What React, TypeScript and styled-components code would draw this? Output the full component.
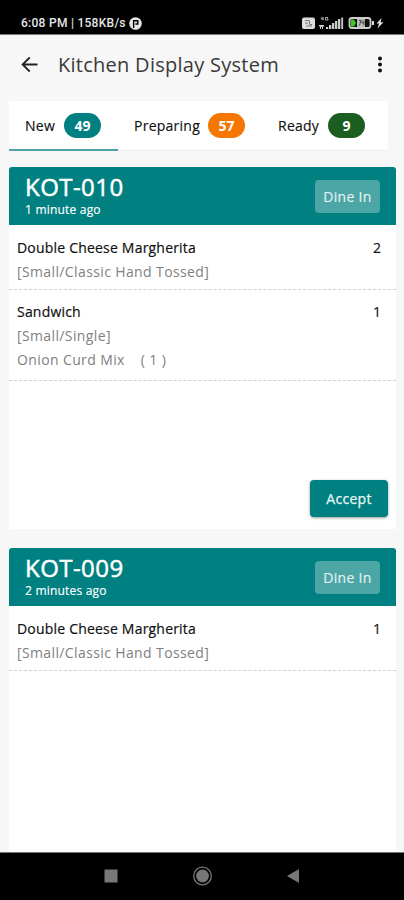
import React from 'react';
import styled, { createGlobalStyle } from 'styled-components';

const GlobalStyle = createGlobalStyle`
  *, *::before, *::after { box-sizing: border-box; }
  html, body { margin: 0; padding: 0; background: #f7f7f7; }
  body { font-family: "Open Sans", "Noto Sans", sans-serif; overflow: hidden; }
  button { font: inherit; border: 0; padding: 0; background: none; cursor: pointer; }
`;

const Screen = styled.div`
  display: flex;
  flex-direction: column;
  width: 404px;
  height: 900px;
  background: #f7f7f7;
  color: #111;
  overflow: hidden;
`;

const StatusBar = styled.div`
  display: flex;
  flex: none;
  justify-content: space-between;
  height: 35px;
  padding: 12px 20px 0 21px;
  background: #000;
  border-bottom: 1px solid #777;
  color: #e6e6e6;
`;

const StatusText = styled.div`
  display: flex;
  align-items: center;
  gap: 3px;
  height: 22px;
  font: 500 12px/22px Roboto, sans-serif;
  letter-spacing: 0.27px;
  white-space: nowrap;
`;

const StatusIcons = styled.div`
  display: flex;
  height: 22px;
  align-items: center;
`;

const TitleBar = styled.header`
  display: flex;
  flex: none;
  align-items: center;
  height: 66px;
  padding: 0 17px 7px 20px;
`;

const IconButton = styled.button`
  display: flex;
  flex: none;
`;

const Title = styled.h1`
  flex: 1;
  margin: 0 0 0 19px;
  font-size: 20px;
  line-height: 28px;
  font-weight: 400;
  letter-spacing: 0.27px;
  color: #3a3a3a;
  white-space: nowrap;
`;

const Tabs = styled.nav`
  display: flex;
  flex: none;
  width: 379px;
  height: 50px;
  margin-left: 9px;
  background: #fff;
  border-bottom: 1px solid #eee;
`;

const Tab = styled.button<{ $width: number; $active?: boolean }>`
  display: flex;
  flex: none;
  align-items: center;
  justify-content: space-between;
  width: ${p => p.$width}px;
  height: 50px;
  padding: 0 17px 0 16px;
  border-bottom: 2px solid ${p => (p.$active ? '#4fa3a3' : 'transparent')};
  font-size: 14px;
  letter-spacing: 0.25px;
  -webkit-text-stroke: 0.15px currentColor;
  color: #111;
`;

const Count = styled.span<{ $color: string }>`
  width: 37px;
  height: 25px;
  border-radius: 13px;
  background: ${p => p.$color};
  color: #fff;
  font-size: 14px;
  letter-spacing: 0;
  -webkit-text-stroke: 0;
  font-weight: 700;
  line-height: 25px;
  text-align: center;
`;

const Tickets = styled.main`
  display: flex;
  flex: 1;
  flex-direction: column;
  gap: 19px;
  min-height: 0;
  padding: 16px 8px 0 9px;
  overflow: hidden;
`;

const Card = styled.article`
  display: flex;
  flex: none;
  flex-direction: column;
  height: 362px;
  background: #fff;
  border-radius: 3px 3px 0 0;
  overflow: hidden;
`;

const CardHeader = styled.header`
  display: flex;
  flex: none;
  align-items: center;
  justify-content: space-between;
  height: 58px;
  padding: 0 16px;
  background: #008080;
  color: #fff;
`;

const Number = styled.h2`
  margin: 0;
  font-size: 24px;
  font-weight: 400;
  line-height: 29px;
  letter-spacing: 0.45px;
  -webkit-text-stroke: 0.5px currentColor;
`;

const Age = styled.div`
  height: 20px;
  font-size: 12px;
  letter-spacing: 0.2px;
  -webkit-text-stroke: 0.15px currentColor;
  line-height: 18px;
`;

const OrderType = styled.span`
  width: 65px;
  height: 33px;
  border-radius: 4px;
  background: #4da6a6;
  color: #e4f3f3;
  font-size: 14px;
  letter-spacing: 0.3px;
  -webkit-text-stroke: 0.15px currentColor;
  line-height: 33px;
  text-align: center;
`;

const Item = styled.section`
  display: flex;
  justify-content: space-between;
  padding: 11px 15px 5px 8px;
  border-bottom: 1px dashed #cdd2d2;
  font-size: 14px;
  line-height: 24px;

  & + & {
    padding-top: 10px;
    padding-bottom: 8px;
  }
`;

const ItemName = styled.div`
  letter-spacing: 0.2px;
  -webkit-text-stroke: 0.2px currentColor;
  white-space: nowrap;
`;

const Detail = styled.div`
  color: #808080;
  letter-spacing: 0.38px;
  white-space: pre;
`;

const Quantity = styled.div`
  -webkit-text-stroke: 0.15px currentColor;
`;

const Accept = styled.button`
  align-self: flex-end;
  width: 78px;
  height: 37px;
  margin: auto 8px 12px 0;
  border-radius: 4px;
  background: #008080;
  box-shadow: 0 1px 3px rgba(0, 0, 0, 0.4);
  color: #eaf7f7;
  font-size: 14px;
  letter-spacing: 0.3px;
  -webkit-text-stroke: 0.25px currentColor;
`;

const NavBar = styled.footer`
  display: flex;
  flex: none;
  align-items: center;
  justify-content: space-between;
  height: 48px;
  padding: 0 103px 1px;
  background: #000;
  border-top: 1px solid #777;
`;

type OrderItem = { name: string; details: string[]; quantity: number };
type Order = { id: string; age: string; items: OrderItem[]; canAccept?: boolean };

const margherita = { name: 'Double Cheese Margherita', details: ['[Small/Classic Hand Tossed]'] };

const orders: Order[] = [
  {
    id: 'KOT-010',
    age: '1 minute ago',
    canAccept: true,
    items: [
      { ...margherita, quantity: 2 },
      { name: 'Sandwich', details: ['[Small/Single]', 'Onion Curd Mix    ( 1 )'], quantity: 1 },
    ],
  },
  { id: 'KOT-009', age: '2 minutes ago', items: [{ ...margherita, quantity: 1 }] },
];

const tabs = [
  { label: 'New', count: 49, color: '#008080', width: 109 },
  { label: 'Preparing', count: 57, color: '#f57600', width: 144 },
  { label: 'Ready', count: 9, color: '#1b5e20', width: 120 },
];

export default function App() {
  return (
    <>
      <GlobalStyle />
      <Screen>
        <StatusBar>
          <StatusText>
            <span>6:08 PM | 158KB/s</span>
            <svg width="13" height="13" viewBox="0 0 13 13">
              <circle cx="6.5" cy="6.5" r="6.3" fill="#e6e6e6" />
              <path d="M4.6 11V3.8H8.8V7H6.4" fill="none" stroke="#000" strokeWidth="1.4" />
            </svg>
          </StatusText>
          <StatusIcons>
            <svg width="83" height="16" viewBox="301 15 83 16">
              <rect x="302" y="17.5" width="13" height="11.5" rx="2" fill="#ddd" />
              <path d="M305 20.5h4M305 23h3M309.5 20.5v4h2.5M306 26h6" stroke="#777" strokeWidth="1" fill="none" />
              <path d="M322.5 17l-1.5 2h2.5M323 17v3.3M328 17.5h-2.5v2.5h2.5v-1.2h-1" stroke="#bbb" strokeWidth="0.9" fill="none" />
              <path d="M319 25h5v1.5h-1V29h-1v-2h-1v2h-1v-2.5h-1z" fill="#ccc" />
              <path d="M326 27h2.2v2h-2.2zM329 25h2.3v4H329zM332 23h2.3v6H332zM335 21h2.3v8H335zM338 19h2.3v10H338zM341.3 17.5h1.8V29h-1.8z" fill="#ccc" />
              <rect x="349.5" y="18" width="21" height="10" rx="2.5" fill="#111" stroke="#ccc" strokeWidth="1.8" />
              <path d="M351 19.5h3l2 3.5-2 3.5h-3z" fill="#3ec51e" />
              <path d="M357 19h8v8h-8z" fill="#bbb" />
              <path d="M359 20.5h2l-1.5 5M362 20.5v2.5h2M364 20.5v5" fill="none" stroke="#333" strokeWidth="0.8" />
              <path d="M372 21h2v4h-2zM381.5 18l-5 5.5h2.5l-1.5 5 6-6.2h-2.8z" fill="#ddd" />
            </svg>
          </StatusIcons>
        </StatusBar>
        <TitleBar>
          <IconButton aria-label="Back">
            <svg width="19" height="20" viewBox="0 0 19 20" fill="none" stroke="#222" strokeWidth="1.8">
              <path d="M17.5 9.5H2.3M9.7 2.5L2.6 9.5l7.1 7" />
            </svg>
          </IconButton>
          <Title>Kitchen Display System</Title>
          <IconButton aria-label="More options">
            <svg width="14" height="18" viewBox="0 0 14 18" fill="#111">
              <circle cx="7" cy="2.5" r="2" />
              <circle cx="7" cy="8.5" r="2" />
              <circle cx="7" cy="14.5" r="2" />
            </svg>
          </IconButton>
        </TitleBar>
        <Tabs>
          {tabs.map((tab, i) => (
            <Tab key={tab.label} $width={tab.width} $active={i === 0}>
              {tab.label}
              <Count $color={tab.color}>{tab.count}</Count>
            </Tab>
          ))}
        </Tabs>
        <Tickets>
          {orders.map(order => (
            <Card key={order.id}>
              <CardHeader>
                <div>
                  <Number>{order.id}</Number>
                  <Age>{order.age}</Age>
                </div>
                <OrderType>Dine In</OrderType>
              </CardHeader>
              {order.items.map(item => (
                <Item key={item.name}>
                  <div>
                    <ItemName>{item.name}</ItemName>
                    {item.details.map(detail => (
                      <Detail key={detail}>{detail}</Detail>
                    ))}
                  </div>
                  <Quantity>{item.quantity}</Quantity>
                </Item>
              ))}
              {order.canAccept && <Accept>Accept</Accept>}
            </Card>
          ))}
        </Tickets>
        <NavBar>
          <svg width="16" height="16" viewBox="0 0 16 16">
            <rect x="1.5" y="1.5" width="13" height="13" fill="#777" />
          </svg>
          <svg width="20" height="20" viewBox="0 0 20 20">
            <circle cx="10.5" cy="10" r="8.8" fill="none" stroke="#777" strokeWidth="1.3" />
            <circle cx="10.5" cy="10" r="6.4" fill="#777" />
          </svg>
          <svg width="16" height="16" viewBox="0 0 16 16">
            <path d="M14 1v14L2 8z" fill="#777" />
          </svg>
        </NavBar>
      </Screen>
    </>
  );
}
